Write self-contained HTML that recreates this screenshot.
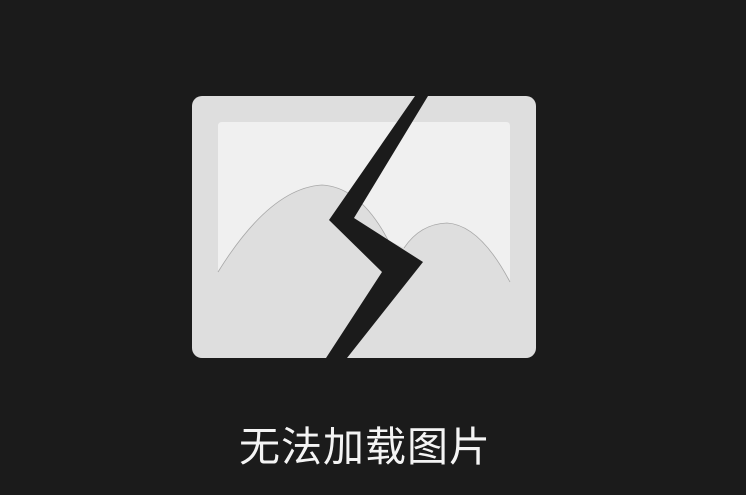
<!DOCTYPE html>
<html><head><meta charset="utf-8"><style>
html,body{margin:0;padding:0;background:#1b1b1b;width:746px;height:495px;overflow:hidden}
svg{position:absolute;left:0;top:0}
.t{position:absolute;left:-8px;width:746px;top:422px;text-align:center;color:#f4f4f4;font:41px/50px "Liberation Sans","Noto Sans CJK SC",sans-serif;letter-spacing:1px}
</style></head><body>
<svg width="746" height="495" viewBox="0 0 746 495">
<rect x="192" y="96" width="344" height="262" rx="10" fill="#dedede"/>
<path d="M218 272 V126 Q218 122 222 122 H506 Q510 122 510 126 V282 Q480 225 447 223 Q420 224 404 248 L388 240 Q360 187 322 185 Q270 188 218 272 Z" fill="#f0f0f0"/>
<path d="M218 272 Q270 188 322 185 Q360 187 388 240 M404 248 Q420 224 447 223 Q480 225 510 282" fill="none" stroke="#a8a8a8" stroke-width="0.8"/>
<polygon points="415,96 428,96 354,218 423,262 347,358 326,358 382,272 329,220" fill="#1b1b1b"/>
</svg>
<div class="t">无法加载图片</div>
</body></html>
